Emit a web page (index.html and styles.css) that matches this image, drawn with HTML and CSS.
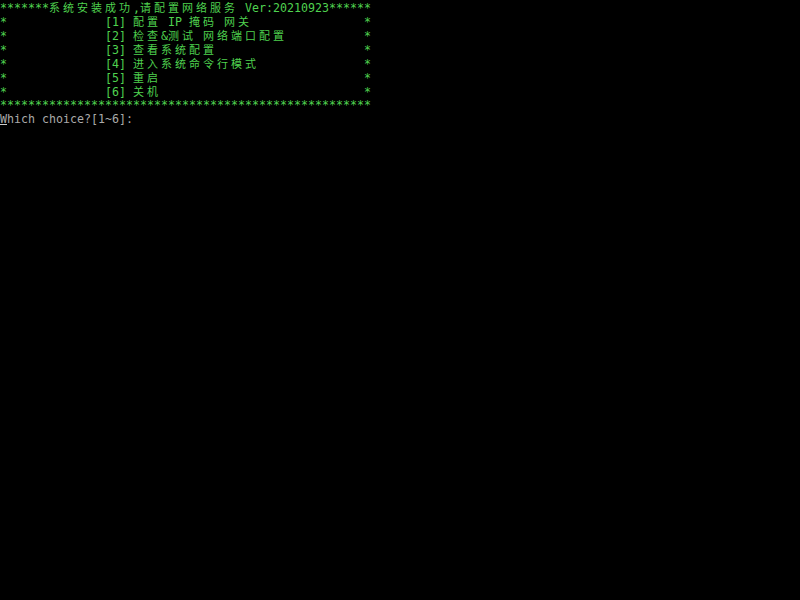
FILE: index.html
```html
<!DOCTYPE html>
<html lang="zh-CN">
<head>
    <meta charset="UTF-8">
    <title>console</title>
    <link rel="stylesheet" href="styles.css">
</head>
<body>
    <div class="screen">
        <div class="line">*******<span class="cjk">系统安装成功</span>,<span class="cjk">请配置网络服务</span> Ver:20210923******</div>
        <div class="line">*              [1] <span class="cjk">配置</span> IP <span class="cjk">掩码</span> <span class="cjk">网关</span>                *</div>
        <div class="line">*              [2] <span class="cjk">检查</span>&amp;<span class="cjk">测试</span> <span class="cjk">网络端口配置</span>           *</div>
        <div class="line">*              [3] <span class="cjk">查看系统配置</span>                     *</div>
        <div class="line">*              [4] <span class="cjk">进入系统命令行模式</span>               *</div>
        <div class="line">*              [5] <span class="cjk">重启</span>                             *</div>
        <div class="line">*              [6] <span class="cjk">关机</span>                             *</div>
        <div class="line">*****************************************************</div>
        <div class="line prompt"><span class="cursor">W</span>hich choice?[1~6]:</div>
    </div>
</body>
</html>
```
FILE: styles.css
```css
body {
    background-color: #000;
    margin: 0;
    height: 100vh;
}
.screen {
    font-family: "DejaVu Sans Mono", monospace;
    font-size: 11.63px;
    color: #4fd24f;
}
.line {
    height: 14px;
    line-height: 14px;
    white-space: pre;
    overflow: hidden;
}
.cjk {
    font-family: "Noto Sans CJK SC", sans-serif;
    font-size: 11px;
    letter-spacing: 3px;
    line-height: 14px;
}
.prompt {
    color: #aaaaaa;
}
.cursor {
    position: relative;
}
.cursor::after {
    content: "";
    position: absolute;
    left: 0;
    width: 7px;
    top: 12px;
    height: 1px;
    background-color: #cccccc;
}
```
